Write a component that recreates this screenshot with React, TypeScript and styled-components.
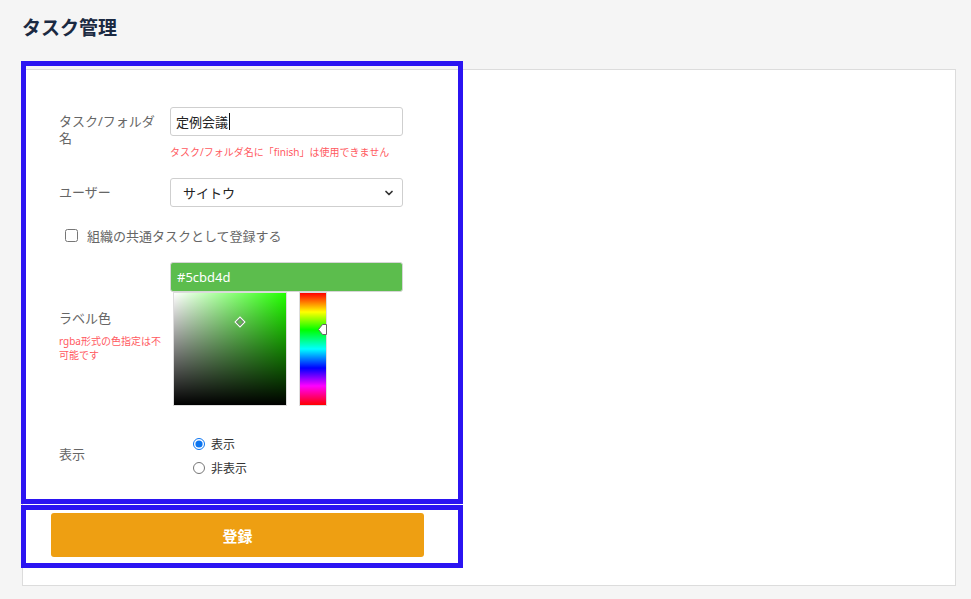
import React from "react";
import styled, { createGlobalStyle } from "styled-components";
import { ChevronDown } from "lucide-react";

const FONT = `"Noto Sans", "Noto Sans CJK JP", sans-serif`;

export default function App() {
  return (
    <>
      <GlobalStyle />
      <Page>
        <Title>タスク管理</Title>
        <Card>
          <FormSection>
            <Row>
              <Label>タスク/フォルダ名</Label>
              <Field>
                <FakeInput>
                  定例会議
                  <Caret />
                </FakeInput>
                <ErrorText>タスク/フォルダ名に「finish」は使用できません</ErrorText>
              </Field>
            </Row>

            <Row $top={19} $center>
              <Label $pad={0}>ユーザー</Label>
              <Field>
                <SelectBox>
                  <span>サイトウ</span>
                  <ChevronDown size={12} strokeWidth={3.5} color="#333" />
                </SelectBox>
              </Field>
            </Row>

            <CheckRow>
              <input type="checkbox" />
              <span>組織の共通タスクとして登録する</span>
            </CheckRow>

            <Row $top={17} $center>
              <LabelBlock>
                <Label $pad={0}>ラベル色</Label>
                <Note>rgba形式の色指定は不可能です</Note>
              </LabelBlock>
              <Field>
                <ColorInput>#5cbd4d</ColorInput>
                <Picker>
                  <Saturation>
                    <SatHandle />
                  </Saturation>
                  <HueBar>
                    <HuePointer viewBox="0 0 9 11">
                      <path d="M8.5 0.5 H4.5 L0.5 5.5 L4.5 10.5 H8.5 Z" fill="#fff" stroke="#666" strokeWidth="1" />
                    </HuePointer>
                  </HueBar>
                </Picker>
              </Field>
            </Row>

            <Row $top={26} $center>
              <Label $pad={0} $lift={4}>表示</Label>
              <RadioGroup>
                <RadioItem>
                  <input type="radio" name="visible" defaultChecked />
                  <span>表示</span>
                </RadioItem>
                <RadioItem>
                  <input type="radio" name="visible" />
                  <span>非表示</span>
                </RadioItem>
              </RadioGroup>
            </Row>
          </FormSection>

          <ButtonSection>
            <SubmitButton>登録</SubmitButton>
          </ButtonSection>
        </Card>
      </Page>
    </>
  );
}

// --- Styled Components ---

const GlobalStyle = createGlobalStyle`
  html, body {
    margin: 0;
    background: #f5f5f5;
    font-family: ${FONT};
  }
  * { box-sizing: border-box; }
`;

const Page = styled.div`
  width: 971px;
  height: 599px;
  padding: 14px 16px 0 22px;
  overflow: hidden;
`;

const Title = styled.h1`
  margin: 0 0 27px;
  font-size: 19px;
  line-height: 28px;
  font-weight: 700;
  color: #1b2a42;
  font-family: ${FONT};
`;

const Card = styled.div`
  width: 934px;
  height: 517px;
  background: #fff;
  border: 1px solid #dcdcdc;
  display: flex;
  flex-direction: column;
`;

/* annotation highlight drawn over the section */
const Highlight = `
  &::after {
    content: "";
    position: absolute;
    border: 5px solid #2b14f2;
    pointer-events: none;
  }
`;

const FormSection = styled.div`
  position: relative;
  width: 440px;
  height: 434px;
  padding: 37px 0 0 36px;
  ${Highlight}
  &::after {
    top: -9px;
    left: -2px;
    right: 0;
    bottom: 0;
  }
`;

const Row = styled.div<{ $top?: number; $center?: boolean }>`
  display: flex;
  align-items: ${({ $center }) => ($center ? "center" : "flex-start")};
  margin-top: ${({ $top }) => $top ?? 0}px;
`;

const Label = styled.div<{ $pad?: number; $lift?: number }>`
  width: 100px;
  margin-right: 11px;
  padding-top: ${({ $pad }) => $pad ?? 6}px;
  padding-bottom: ${({ $lift }) => $lift ?? 0}px;
  font-size: 13px;
  line-height: 17px;
  color: #666;
`;

const LabelBlock = styled.div`
  width: 100px;
  margin-right: 11px;
  padding-top: 3px;

  ${Label} {
    margin: 0 0 7px;
  }
`;

const Note = styled.div`
  font-size: 10px;
  line-height: 14px;
  color: #ff5a5f;
  width: 102px;
  word-break: break-all;
`;

const Field = styled.div`
  width: 233px;
  display: flex;
  flex-direction: column;
`;

const FakeInput = styled.div`
  height: 29px;
  border: 1px solid #cfcfcf;
  border-radius: 3px;
  padding: 0 5px;
  display: flex;
  align-items: center;
  font-size: 13px;
  color: #222;
`;

const Caret = styled.span`
  width: 1px;
  height: 17px;
  background: #111;
  margin-left: 1px;
`;

const ErrorText = styled.div`
  margin-top: 9px;
  font-size: 10px;
  line-height: 14px;
  color: #ff5a5f;
  white-space: nowrap;
`;

const SelectBox = styled.div`
  height: 29px;
  border: 1px solid #cfcfcf;
  border-radius: 3px;
  padding: 0 7px 0 12px;
  display: flex;
  align-items: center;
  justify-content: space-between;
  font-size: 13px;
  color: #222;
`;

const CheckRow = styled.label`
  display: flex;
  align-items: center;
  gap: 9px;
  margin: 18px 0 0 6px;
  height: 20px;
  font-size: 13px;
  color: #666;

  input {
    width: 13px;
    height: 13px;
    margin: 0;
  }
`;

const ColorInput = styled.div`
  height: 30px;
  background: #5cbd4d;
  border: 1px solid #d6d6d6;
  border-radius: 3px;
  padding: 0 6px;
  display: flex;
  align-items: center;
  font-size: 13px;
  color: #fff;
`;

const Picker = styled.div`
  display: flex;
  gap: 12px;
  padding-left: 3px;
`;

const Saturation = styled.div`
  position: relative;
  width: 114px;
  height: 114px;
  border: 1px solid #ddd;
  background:
    linear-gradient(to top, #000, rgba(0, 0, 0, 0)),
    linear-gradient(to right, #fff, rgba(255, 255, 255, 0)),
    hsl(112, 100%, 50%);
`;

const SatHandle = styled.div`
  position: absolute;
  left: 63px;
  top: 26px;
  width: 6px;
  height: 6px;
  transform: rotate(45deg);
  border: 1.5px solid #777;
  outline: 1px solid #fff;
  background: #5cbd4d;
`;

const HueBar = styled.div`
  position: relative;
  width: 28px;
  height: 114px;
  border: 1px solid #ddd;
  background: linear-gradient(
    to bottom,
    #f00 0%,
    #ff0 17%,
    #0f0 33%,
    #0ff 50%,
    #00f 67%,
    #f0f 83%,
    #f00 100%
  );
`;

const HuePointer = styled.svg`
  position: absolute;
  right: -1px;
  top: 31px;
  width: 9px;
  height: 11px;
`;

const RadioGroup = styled.div`
  display: flex;
  flex-direction: column;
  padding-left: 23px;
`;

const RadioItem = styled.label`
  display: flex;
  align-items: center;
  gap: 6px;
  height: 24px;
  font-size: 12px;
  color: #333;

  input {
    width: 12px;
    height: 12px;
    margin: 0;
    accent-color: #0b74f0;
  }
`;

const ButtonSection = styled.div`
  position: relative;
  width: 440px;
  height: 63px;
  margin-top: 1px;
  padding: 8px 0 0 28px;
  ${Highlight}
  &::after {
    top: 0;
    left: -2px;
    right: 0;
    bottom: 0;
  }
`;

const SubmitButton = styled.button`
  width: 373px;
  height: 44px;
  border: none;
  border-radius: 3px;
  background: #ee9f12;
  color: #fff;
  font-family: ${FONT};
  font-size: 15px;
  font-weight: 700;
  cursor: pointer;
`;
